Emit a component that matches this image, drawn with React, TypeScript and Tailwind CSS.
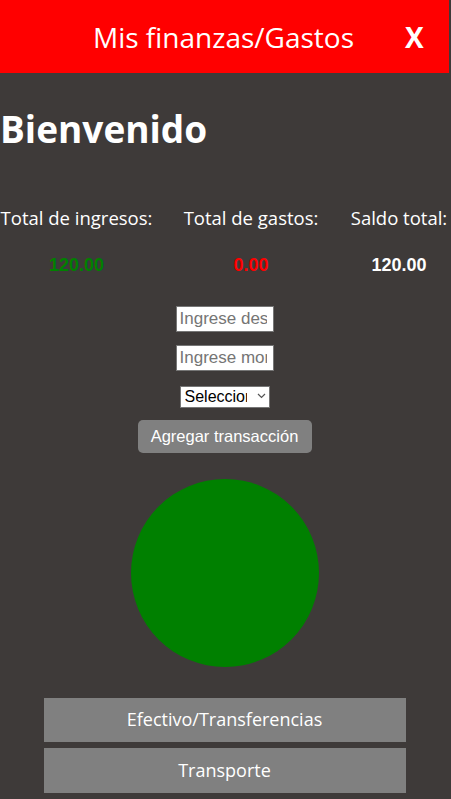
export default function App() {
  const ingresos = 120
  const gastos = 0
  const saldo = ingresos - gastos

  return (
    <div className="min-h-[799px] w-[451px] bg-[#3e3a39] font-['Open_Sans','Noto_Sans',sans-serif] text-white">
      <div className="w-[449px]">
        <header className="flex h-[73px] items-center bg-[#ff0000]">
          <h2 className="ml-[93px] text-[28px] leading-none">Mis finanzas/Gastos</h2>
          <button className="ml-[51px] text-[28px] font-bold leading-none">X</button>
        </header>

        <h1 className="mt-[37px] text-[37px] font-bold leading-none">Bienvenido</h1>

        <div className="mt-[62px] grid grid-cols-[153px_1fr_100px] gap-x-[30px]">
          <p className="whitespace-nowrap text-[18.5px] leading-none text-center">Total de ingresos:</p>
          <p className="whitespace-nowrap text-[18.5px] leading-none text-center">Total de gastos:</p>
          <p className="whitespace-nowrap text-[18.5px] leading-none text-center">Saldo total:</p>
          <p className="mt-[28px] text-center font-['Liberation_Sans',sans-serif] text-[18px] font-bold leading-none text-[#008000]">{ingresos.toFixed(2)}</p>
          <p className="mt-[28px] text-center font-['Liberation_Sans',sans-serif] text-[18px] font-bold leading-none text-[#ff0000]">{gastos.toFixed(2)}</p>
          <p className="mt-[28px] text-center font-['Liberation_Sans',sans-serif] text-[18px] font-bold leading-none">{saldo.toFixed(2)}</p>
        </div>

        <form className="mt-[32px] flex flex-col items-center font-['Liberation_Sans',sans-serif]">
          <input
            placeholder="Ingrese descripción"
            className="h-[26px] w-[98px] border border-[#767676] bg-white pl-[3px] pr-[6px] text-[17px] text-black placeholder:text-[#757575]"
          />
          <input
            placeholder="Ingrese monto"
            className="mt-[13px] h-[26px] w-[98px] border border-[#767676] bg-white pl-[3px] pr-[6px] text-[17px] text-black placeholder:text-[#757575]"
          />
          <div className="relative mt-[14px] h-[22px] w-[90px]">
            <select className="h-[22px] w-[90px] appearance-none border border-[#767676] bg-white pl-[4px] pr-[22px] text-[16px] leading-none text-black">
              <option>Seleccione</option>
            </select>
            <svg
              className="pointer-events-none absolute right-[4px] top-[8px]"
              width="9"
              height="6"
              viewBox="0 0 9 6"
              fill="none"
              stroke="#555"
              strokeWidth="1.2"
            >
              <path d="M1 1l3.5 3.5L8 1" />
            </svg>
          </div>
          <button
            type="button"
            className="mt-[13px] h-[33px] w-[174px] rounded-[5px] bg-[#808080] text-[16.5px] text-white"
          >
            Agregar transacción
          </button>
        </form>

        <div className="mt-[26px] flex justify-center">
          <svg width="188" height="188" viewBox="0 0 188 188">
            <circle cx="94" cy="94" r="94" fill="#008000" />
          </svg>
        </div>

        <div className="mt-[31px] flex flex-col items-center gap-[6px]">
          <button className="h-[44px] w-[362px] bg-[#808080] text-[18px]">Efectivo/Transferencias</button>
          <button className="h-[45px] w-[362px] bg-[#808080] text-[18px]">Transporte</button>
        </div>
      </div>
    </div>
  )
}
